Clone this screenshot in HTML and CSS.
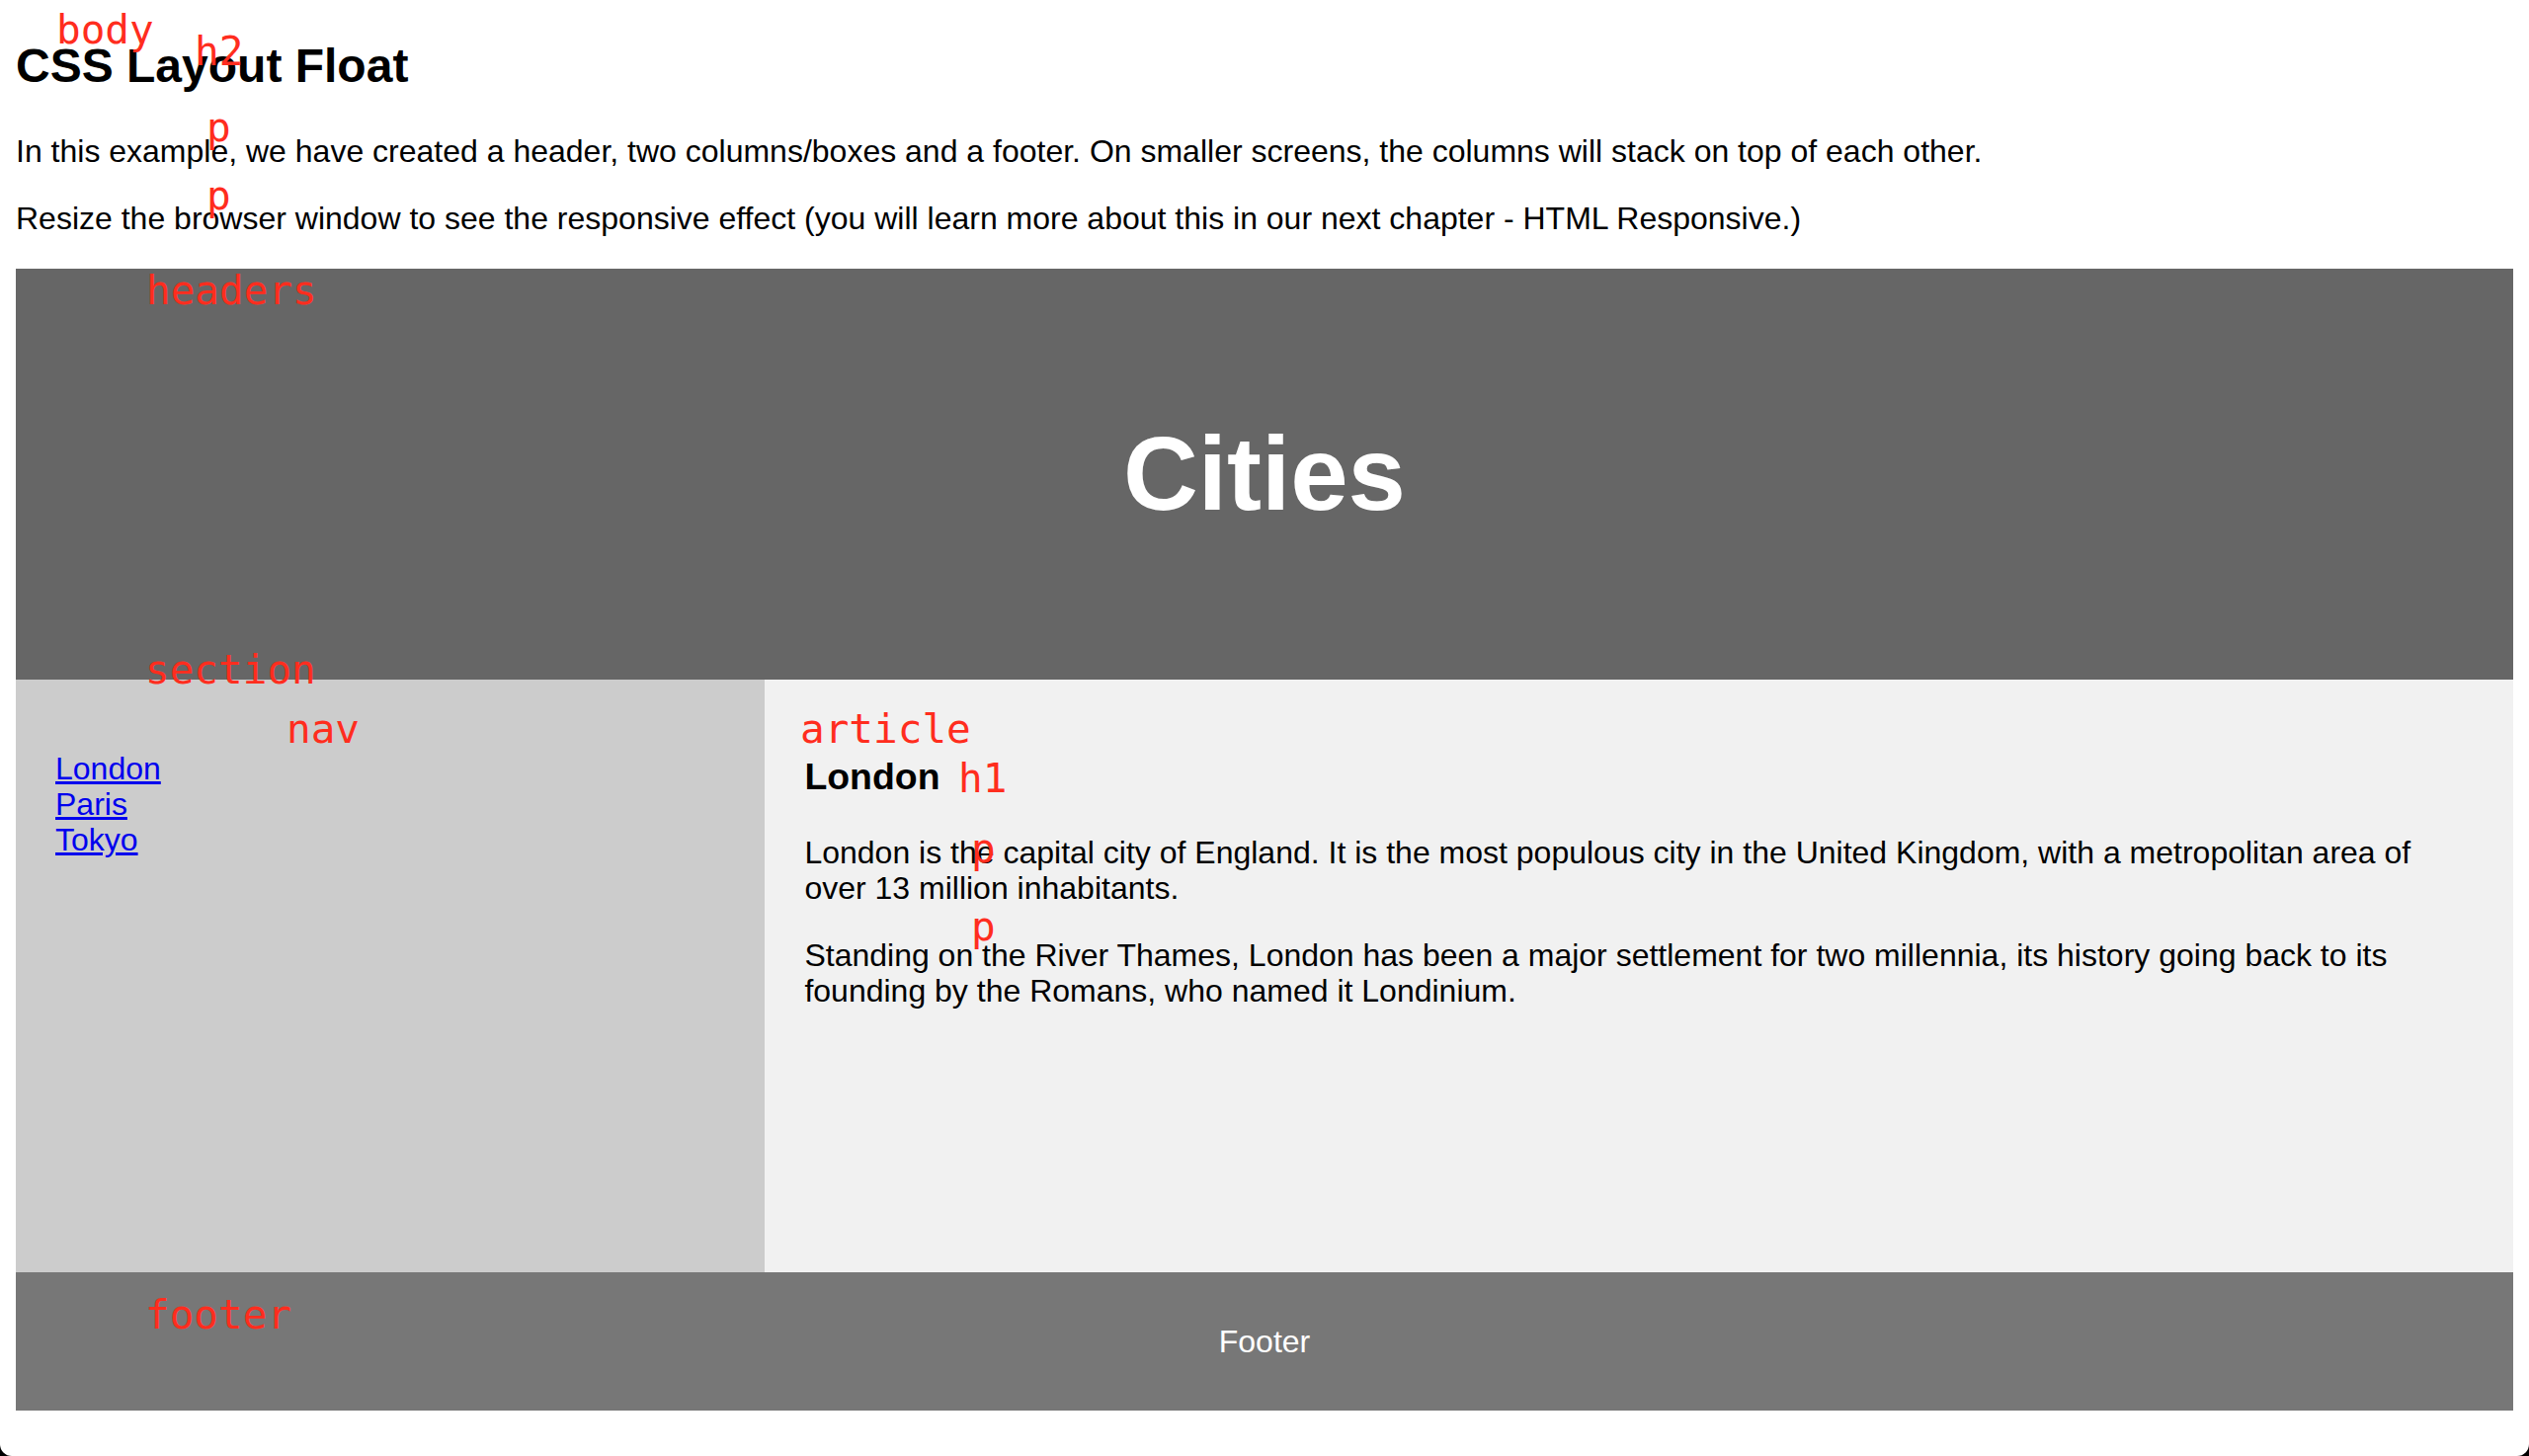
FILE: index.html
```html
<!DOCTYPE html>
<html lang="en">
<head>
<meta charset="utf-8">
<title>CSS Layout Float</title>
<link rel="stylesheet" href="styles.css">
</head>
<body class="window">
<div class="page">
  <h2 class="title">CSS Layout Float</h2>
  <p class="text">In this example, we have created a header, two columns/boxes and a footer. On smaller screens, the columns will stack on top of each other.</p>
  <p class="text">Resize the browser window to see the responsive effect (you will learn more about this in our next chapter - HTML Responsive.)</p>

  <header class="hero">
    <h2 class="hero-title">Cities</h2>
  </header>

  <section class="columns">
    <nav class="side">
      <ul class="side-list">
        <li><a class="side-link" href="#">London</a></li>
        <li><a class="side-link" href="#">Paris</a></li>
        <li><a class="side-link" href="#">Tokyo</a></li>
      </ul>
    </nav>
    <article class="main">
      <h1 class="main-title">London</h1>
      <p class="text">London is the capital city of England. It is the most populous city in the United Kingdom, with a metropolitan area of over 13 million inhabitants.</p>
      <p class="text">Standing on the River Thames, London has been a major settlement for two millennia, its history going back to its founding by the Romans, who named it Londinium.</p>
    </article>
  </section>

  <footer class="foot">
    <p class="text">Footer</p>
  </footer>

  <span class="tag tag-body">body</span>
  <span class="tag tag-h2">h2</span>
  <span class="tag tag-p1">p</span>
  <span class="tag tag-p2">p</span>
  <span class="tag tag-headers">headers</span>
  <span class="tag tag-section">section</span>
  <span class="tag tag-nav">nav</span>
  <span class="tag tag-article">article</span>
  <span class="tag tag-h1">h1</span>
  <span class="tag tag-p3">p</span>
  <span class="tag tag-p4">p</span>
  <span class="tag tag-footer">footer</span>
</div>
</body>
</html>
```

FILE: styles.css
```css
* {
  box-sizing: border-box;
}

html {
  background: #000;
  height: 100%;
}

.window {
  margin: 0;
  height: 1474px;
  overflow: hidden;
  background: #fff;
  border-radius: 0 0 12px 12px;
  font-family: "Liberation Sans", Arial, Helvetica, sans-serif;
  font-size: 32px;
  line-height: 36px;
  color: #000;
}

.page {
  position: relative;
  display: flow-root;
  padding: 0 16px;
  height: 100%;
}

.title {
  font-size: 48px;
  line-height: 56px;
  font-weight: bold;
  margin: 39px 0 40px;
}

.text {
  margin: 32px 0;
}

.hero {
  margin-top: 33px;
  background-color: #666;
  padding: 60px;
  text-align: center;
  color: #fff;
}

.hero-title {
  font-size: 105px;
  line-height: 120px;
  font-weight: bold;
  margin: 88px 0;
}

.columns {
  display: flex;
}

.side {
  width: 30%;
  height: 600px;
  background: #ccc;
  padding: 40px;
}

.side-list {
  list-style-type: none;
  padding: 0;
  margin: 32px 0;
}

.side-link {
  color: #0000ee;
  text-decoration: underline;
}

.main {
  width: 70%;
  height: 600px;
  padding: 40px;
  background-color: #f1f1f1;
}

.main-title {
  font-size: 37.44px;
  line-height: 42px;
  font-weight: bold;
  margin: 37.44px 0;
}

.foot {
  background-color: #777;
  padding: 20px;
  text-align: center;
  color: #fff;
}

.tag {
  position: absolute;
  font-family: "DejaVu Sans Mono", monospace;
  font-size: 41px;
  line-height: 41px;
  color: #ff2d1e;
  white-space: nowrap;
}

.tag-body { left: 57px; top: 10px; }
.tag-h2 { left: 197px; top: 32px; }
.tag-p1 { left: 209px; top: 109px; }
.tag-p2 { left: 209px; top: 178px; }
.tag-headers { left: 148px; top: 274px; }
.tag-section { left: 147px; top: 658px; }
.tag-nav { left: 290px; top: 718px; }
.tag-article { left: 810px; top: 718px; }
.tag-h1 { left: 970px; top: 768px; }
.tag-p3 { left: 983px; top: 839px; }
.tag-p4 { left: 983px; top: 918px; }
.tag-footer { left: 147px; top: 1311px; }
```
